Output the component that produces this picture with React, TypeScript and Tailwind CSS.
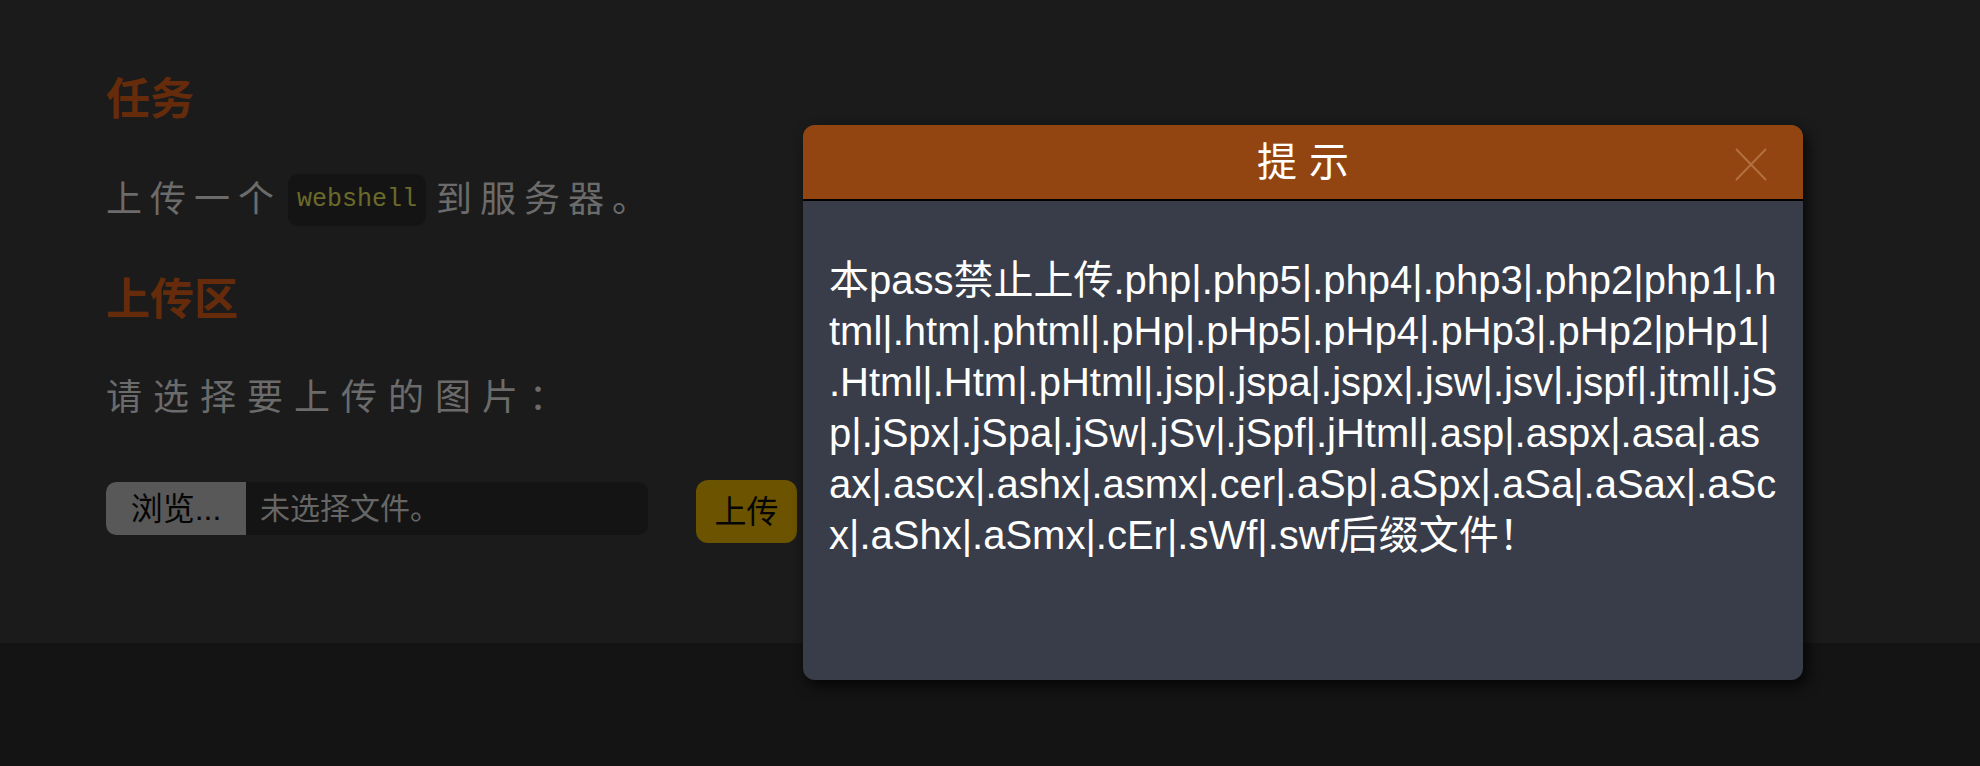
import React from "react";

const cjk = '"Liberation Sans", "Noto Sans CJK SC", sans-serif';
const mono = '"Liberation Mono", "DejaVu Sans Mono", monospace';

const msg =
  "本pass禁止上传.php|.php5|.php4|.php3|.php2|php1|.html|.htm|.phtml|.pHp|.pHp5|.pHp4|.pHp3|.pHp2|pHp1|.Html|.Htm|.pHtml|.jsp|.jspa|.jspx|.jsw|.jsv|.jspf|.jtml|.jSp|.jSpx|.jSpa|.jSw|.jSv|.jSpf|.jHtml|.asp|.aspx|.asa|.asax|.ascx|.ashx|.asmx|.cer|.aSp|.aSpx|.aSa|.aSax|.aScx|.aShx|.aSmx|.cEr|.sWf|.swf后缀文件！";

export default function App() {
  return (
    <div
      className="relative flex h-[766px] w-[1980px] flex-col overflow-hidden bg-[#141414]"
      style={{ fontFamily: cjk }}
    >
      <main className="h-[643px] bg-[#1b1b1b] pl-[106px] pt-[78px]">
        <h2 className="h-[44px] text-[44px] font-bold leading-[44px] text-[#652b0b]">任务</h2>
        <div className="mt-[52px] flex h-[52px] items-center text-[36px] tracking-[8px] text-[#6b6b6b]">
          <span>上传一个</span>
          <code
            className="ml-[6px] flex h-[52px] items-center rounded-[10px] bg-[#141414] px-[9px] text-[25px] tracking-normal text-[#6b6a2a]"
            style={{ fontFamily: mono }}
          >
            webshell
          </code>
          <span className="ml-[10px]">到服务器。</span>
        </div>
        <h2 className="mt-[52px] h-[44px] text-[44px] font-bold leading-[44px] text-[#652b0b]">上传区</h2>
        <div className="mt-[50px] flex h-[52px] items-center text-[36px] tracking-[11px] text-[#6b6b6b]">
          请选择要上传的图片：
        </div>
        <div className="mt-[56px] flex items-start">
          <div className="mt-[2px] flex h-[53px] w-[542px] items-center overflow-hidden rounded-[10px] bg-[#141414]">
            <div className="flex h-full w-[140px] items-center justify-center rounded-l-[8px] bg-[#585858] text-[32px] text-[#050505]">
              浏览...
            </div>
            <div className="pl-[14px] text-[30px] text-[#666666]">未选择文件。</div>
          </div>
          <button className="ml-[48px] flex h-[63px] w-[101px] items-center justify-center rounded-[12px] bg-[#6b5300] text-[32px] text-[#050505]">
            上传
          </button>
        </div>
      </main>
      <footer className="flex-1 bg-[#141414]" />

      <div className="absolute left-[803px] top-[125px] flex h-[555px] w-[1000px] flex-col overflow-hidden rounded-[12px] bg-[#393d49] shadow-[4px_6px_14px_rgba(0,0,0,0.75)]">
        <div className="relative flex h-[76px] items-center justify-center border-b-2 border-black bg-[#924511]">
          <span className="pl-[12px] text-[40px] tracking-[12px] text-white">提示</span>
          <svg
            className="absolute right-[36px] top-[23px]"
            width="32"
            height="33"
            viewBox="0 0 32 33"
            fill="none"
          >
            <path d="M1 1 L31 32 M31 1 L1 32" stroke="#b3703f" strokeWidth="2" />
          </svg>
        </div>
        <div className="flex-1 pl-[26px] pr-[24px] pt-[54px]">
          <p className="break-all text-[40px] leading-[51px] text-white [line-break:anywhere]">{msg}</p>
        </div>
      </div>
    </div>
  );
}
